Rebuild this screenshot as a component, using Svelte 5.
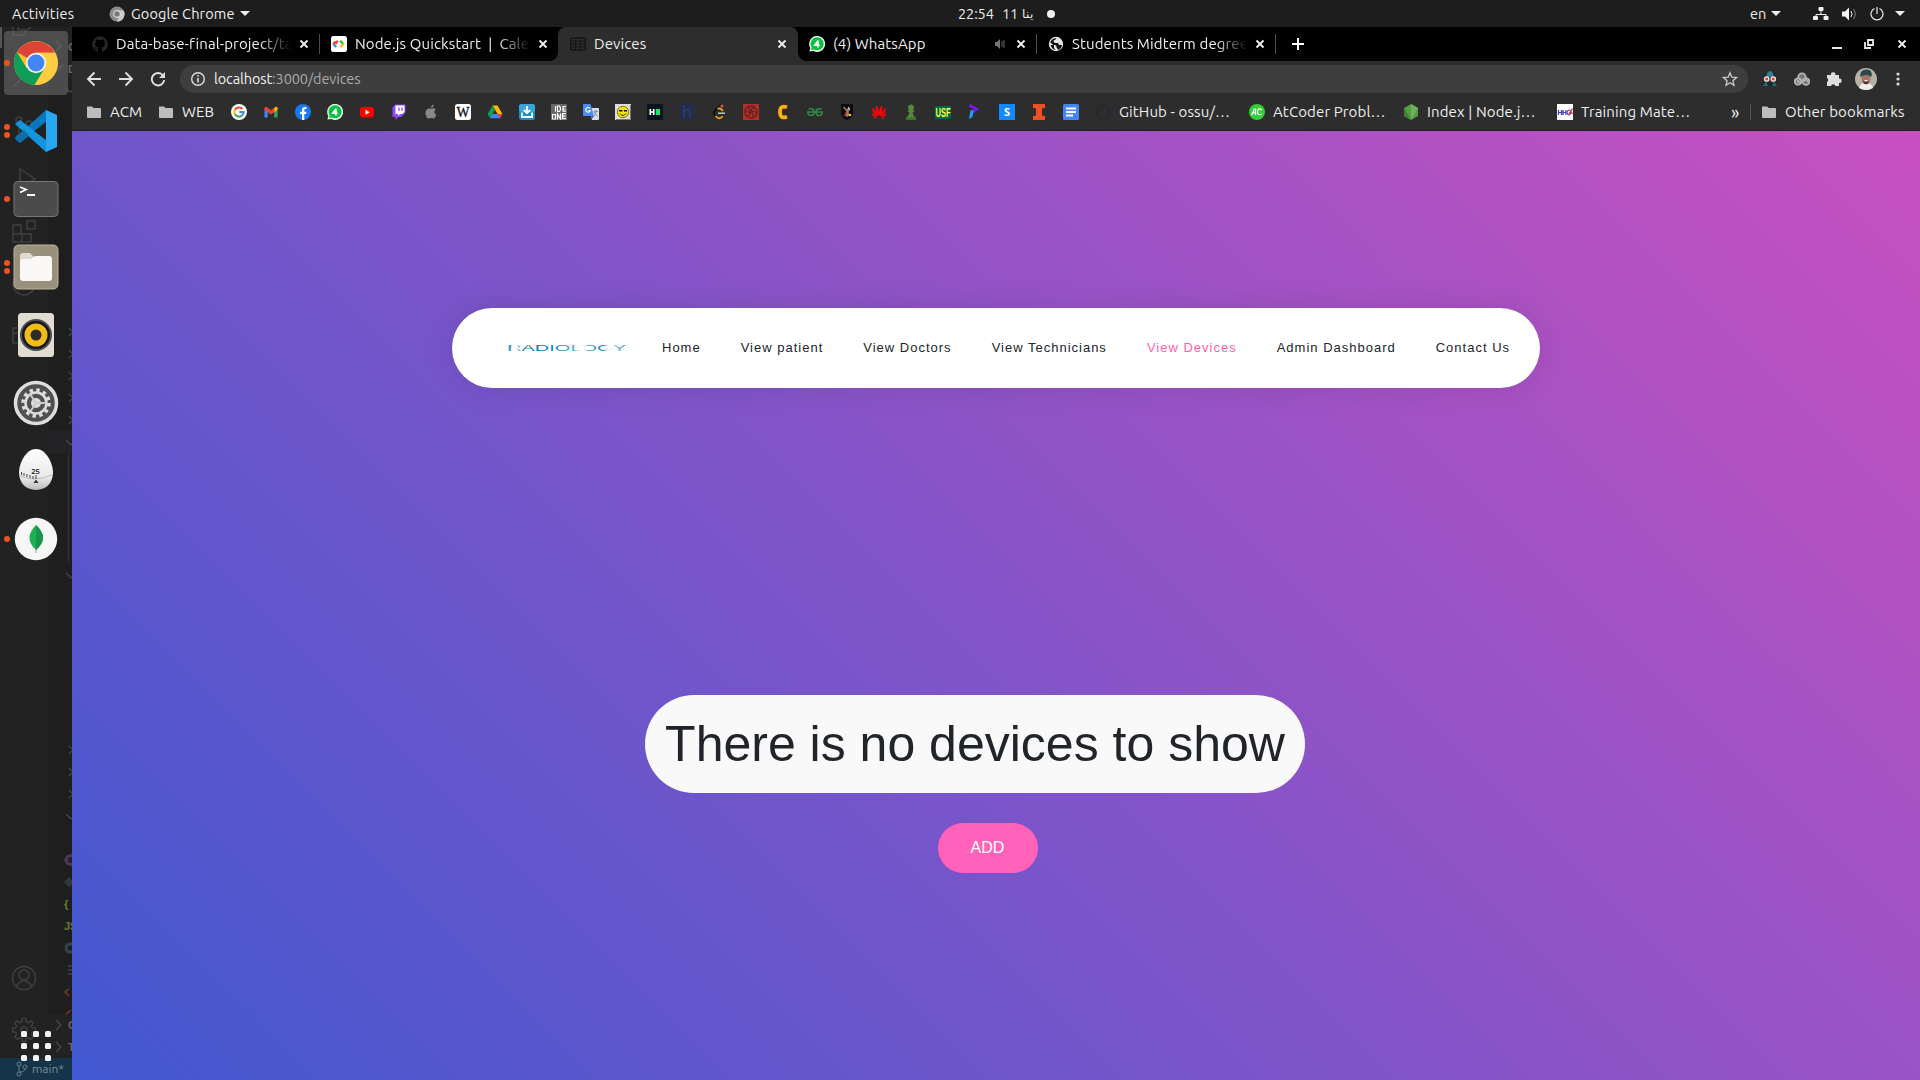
<script>
  const icons = {
    folder: '<path d="M1 2.5h5l1.6 1.6H14q1 0 1 1V13q0 1-1 1H2q-1 0-1-1z" fill="#bdbdbd"/>',
    google: '<circle cx="8" cy="8" r="8" fill="#fff"/><g fill="none" stroke-width="2.1"><path d="M11.4 5A4.6 4.6 0 0 0 4 5.7" stroke="#ea4335"/><path d="M4 5.7a4.6 4.6 0 0 0 0 4.6" stroke="#fbbc05"/><path d="M4 10.3a4.6 4.6 0 0 0 7 1.2" stroke="#34a853"/><path d="M11 11.5A4.6 4.6 0 0 0 12.6 8H8.3" stroke="#4285f4"/></g>',
    gmail: '<path d="M1.5 13.5V4.2l3.2 2.3v7z" fill="#4285f4"/><path d="M14.5 13.5V4.2l-3.2 2.3v7z" fill="#34a853"/><path d="M1.5 4.5Q1.6 2.3 3.7 3L8 6.2 12.3 3q2.1-.7 2.2 1.5v1.3L8 10.5 1.5 5.8z" fill="#ea4335"/><path d="M11.3 4v4.2l3.2-2.4V4.3q-.3-2-2.2-1.3z" fill="#fbbc04"/>',
    facebook: '<circle cx="8" cy="8" r="8" fill="#1877f2"/><path d="M7 16v-6H5V7.7h2V6q0-3 2.8-3h1.7v2h-1q-1.2 0-1.2 1.1v1.6h2.2l-.4 2.3H9.3v6z" fill="#fff"/>',
    whatsapp: '<path d="M.4 15.6 1.3 12A8 8 0 1 1 4.5 15z" fill="#e8f5e9"/><path d="M2 14l.7-2.6A6.5 6.5 0 1 1 5 13.5z" fill="#0bc142"/><path d="M9 4.5v7M9 4.8 5.8 9.2h4.900" fill="none" stroke="#fff" stroke-width="1.6"/>',
    youtube: '<rect x="1" y="3" width="14" height="10.5" rx="2.4" fill="#f00"/><path d="M6.5 5.8v5L10.7 8.3z" fill="#fff"/>',
    twitch: '<path d="M1.5 3.4 4.4.5h10.1v8l-4.4 4.4H7.4l-2.9 2.9v-2.9h-3z" fill="#9146ff"/><path d="M4.5 1.6h9v6.3l-2.2 2.2H9l-2 2v-2H4.5z" fill="#fff"/><path d="M8 3.6v3.5m3-3.5v3.5" stroke="#9146ff" stroke-width="1.3"/>',
    apple: '<path d="M8 4.8c1.2-.9 3.6-1.1 4.8.7-2 1.2-1.9 4.2.6 5.2-.6 1.8-1.8 3.8-3 3.8-.9 0-1.4-.5-2.3-.5s-1.6.5-2.4.5C3.8 14.500 2.500 11 2.500 8.700c0-3.600 3-4.900 5.500-3.900zM8 4C7.900 2.200 9.300.7 10.700.6 10.900 2.400 9.500 4 8 4z" fill="#888"/>',
    wiki: '<rect width="16" height="16" rx="2.500" fill="#fff"/><text x="8" y="12.800" textLength="13" lengthAdjust="spacingAndGlyphs" text-anchor="middle" font-family="Liberation Serif" font-size="14" fill="#111" stroke="#111" stroke-width=".3">W</text>',
    drive: '<path d="M5.600 1.500h4.800l5 8.500h-4.800z" fill="#ffba00"/><path d="M5.600 1.500 8 5.700 3 14.300.6 10z" fill="#0f9d58"/><path d="M5.300 10h10L13 14.300H3z" fill="#4285f4"/><path d="M10.600 10h4.800L13 14.300z" fill="#ea4335"/>',
    download: '<rect width="16" height="16" rx="2.500" fill="#168ec8"/><rect width="16" height="8" rx="2.500" fill="#3aa4d6"/><path d="M8 2v7M4.800 6 8 9.300 11.200 6M3 8.500V13h10V8.500" fill="none" stroke="#fff" stroke-width="1.800"/>',
    ideone: '<rect width="16" height="16" fill="#666"/><g fill="none" stroke="#fff" stroke-width="1.200"><path d="M4.500 2v5.500M6.500 2v5.500h2q2-2.700 0-5.500zM15 2.500h-3v4.700h3M12 5h2.500M1.500 10.500v4.500h3v-4.500zM6.500 15.500V10l3 5V9.500M15 9.700h-3.500v5H15M12 12.200h2.500"/></g>',
    translate: '<path d="M6 4h9q1 0 1 1v10q0 1-1 1H9z" fill="#dce0e3"/><path d="M1 0h6.500L11 12H1q-1 0-1-1V1q0-1 1-1z" fill="#4c8bf5"/><path d="M7.500 12H11l-2 3z" fill="#3367d6"/><path d="M7 4.500A2.300 2.300 0 1 0 7.300 6.500H5.200" fill="none" stroke="#fff" stroke-width="1.100"/><path d="M10.500 7.300H15M13 6v1.300q-.2 3-2 4.700m0-4 3.500 4.500" fill="none" stroke="#78909c"/>',
    smile: '<rect width="16" height="16" fill="#ddd"/><path d="M1 15.500h14.500V1" fill="none" stroke="#777"/><circle cx="8" cy="8" r="5.700" fill="#f4e800" stroke="#665e00" stroke-width=".8"/><path d="M4 6h3.300v1.500H4.500zm4.700 0H12v1.500H9z"/><path d="M5 9.500q3 4 6 0" fill="none" stroke="#222"/>',
    hackerrank: '<rect width="16" height="16" fill="#0b141e"/><path d="M3.300 5v6m3.400-6v6M3 8h4" stroke="#fff" stroke-width="1.700" fill="none"/><path d="M8.700 5H13v6H8.700z" fill="#1be564"/>',
    hacker: '<rect width="16" height="16" rx="1" fill="#252c48"/><text x="8" y="13.500" text-anchor="middle" font-family="Open Sans" font-size="16" fill="#2e3f72">h</text>',
    leetcode: '<path d="M10 .8 3.800 6.500q-2.200 2.300 0 4.500l2.200 2.500q2 1.800 4.200 0L12 11.500" fill="none" stroke="#101010" stroke-width="1.800"/><path d="M6.500 4.700q2-1 3.500.3l2 1.800M4.500 12l1.800 1.700q1.900 1.300 3.800 0l1.700-1.600" stroke="#f9a51a" fill="none" stroke-width="1.700"/><path d="M7 9.200h7" stroke="#bbb" stroke-width="1.600"/><circle cx="11" cy="2" r="1.600" fill="#d05050"/>',
    wheel: '<rect width="16" height="16" fill="#b02f2a"/><g stroke="#61201d" fill="none" stroke-width="1.200"><circle cx="8" cy="8" r="6.200"/><path d="M8 8Q8 3 12 4M8 8q4-2 6 2M8 8q4 3 1 6M8 8Q7 12 3 12M8 8Q4 9 2 6M8 8Q4 5 7 2"/></g>',
    codechef: '<rect width="16" height="16" rx="2" fill="#302b24"/><path d="M12 3.200Q5 .8 5 8t7 4.900" fill="none" stroke="#fbae17" stroke-width="3.800"/>',
    geeks: '<g fill="none" stroke="#2f8d46" stroke-width="1.500"><path d="M1.500 5q5-1.500 5.500 3T2 11Q.7 10 .8 8H15.200q0 3-2.200 3.500Q9 12 9 8t5.500-3"/></g>',
    shield: '<path d="M2 0h12v10q-1 4-6 6-5-2-6-6z" fill="#0c0c0c"/><path d="m5 4 2 1.500L9 4l2 1-1.500 3 1 3-2 2-2-1 1-4z" fill="#a97867"/><path d="m4.500 3 2 2M9.500 3l1 3" stroke="#eee"/><circle cx="11" cy="11" r="1.300" fill="#d9cb22"/><path d="m5.500 12 2-4" stroke="#c43b3b" stroke-width="1.300"/>',
    flower: '<g fill="#f0060c"><ellipse cx="6.300" cy="7" rx="1.500" ry="5" transform="rotate(-9 6.300 7)"/><ellipse cx="9.700" cy="7" rx="1.500" ry="5" transform="rotate(9 9.700 7)"/><ellipse cx="3.600" cy="8.500" rx="1.200" ry="4.800" transform="rotate(-27 3.600 8.500)"/><ellipse cx="12.400" cy="8.500" rx="1.200" ry="4.800" transform="rotate(27 12.400 8.500)"/><path d="M.5 8.500 5.500 13Q.5 13 .5 8.500m15 0L10.500 13q5 0 5-4.500M2 13.500h4v1H3zm8 0h4l-1 1h-3z"/></g>',
    pawn: '<path d="M8 .5a3 3 0 0 1 2 5.300l1.700 1.400-2 1Q10 12 13 13.500V16H3v-2.500Q6 12 6.300 8.200l-2-1L6 5.800A3 3 0 0 1 8 .5z" fill="#538a3a"/><path d="M3 13.500h10V16H3z" fill="#3f702c"/>',
    usf: '<rect y="2" width="16" height="13" fill="#006747"/><text x="8" y="13" textLength="15" lengthAdjust="spacingAndGlyphs" text-anchor="middle" font-family="Liberation Sans" font-weight="bold" font-size="12.500" fill="#ffff48">USF</text>',
    pshape: '<path d="M2.500 1.200 9.500 5.200 5 8.500" fill="none" stroke="#7418e8" stroke-width="3"/><path d="m2 15 1.500-8.500L6.500 6l-1 7z" fill="#1da1f2"/>',
    sblue: '<rect width="16" height="16" fill="#1389fd"/><text x="8" y="12" text-anchor="middle" font-family="Open Sans" font-weight="bold" font-size="11" fill="#fff">S</text>',
    ired: '<path d="M2 0h12v4h-2l-1 1v6l1 1h2v4H2v-4h2l1-1V5L4 4H2z" fill="#f04e23"/>',
    docs: '<rect width="16" height="16" rx="1.500" fill="#4285f4"/><path d="M3 4.500h10M3 8h10M3 11.500h7" stroke="#fff" stroke-width="1.800"/>',
    github: '<path d="M8 .3a7.900 7.900 0 0 0-2.600 15.300c.5 0 .6-.3.6-.6v-1.600c-2.200.5-2.700-.9-3.100-1.500-.3-.4-.7-.7-.3-.8.800 0 1.200.8 1.500 1.100.6.900 1.400.7 2 .4 0-.4.3-.8.5-1-2.600-.300-3.600-1.500-3.600-3.900 0-1 .3-1.700.9-2.300-.3-.7-.2-1.500.1-2.100.9 0 1.500.5 2 .8a8 8 0 0 1 4 0c.5-.3 1.200-.8 2-.8.3.6.4 1.400.1 2.100.6.600.9 1.300.9 2.300 0 2.400-1 3.600-3.600 3.900.4.400.6.900.6 1.600V15c0 .3.100.6.600.6A7.900 7.900 0 0 0 8 .3z" fill="#24292e"/>',
    atcoder: '<circle cx="8" cy="8" r="8" fill="#31cf38"/><path d="m2.800 11 2.500-6h1.200v6M4 9h2.300M13 6q-4-3-4.500 1.500T13 10" stroke="#fff" fill="none" stroke-width="1.200"/>',
    node: '<path d="m8 0 7 4v8l-7 4-7-4V4z" fill="#539e43"/><path d="m8 0 7 4-7 12z" fill="#6cb35b"/><path d="M1 4 8 16 1 12z" fill="#3c7e36"/>',
    hho: '<rect width="16" height="16" fill="#fff"/><path d="M1.500 6v5m3-5v5m-3-2.500h3M6 6v5m0-2.500h3M9 6v5" stroke="#3a35ba" fill="none" stroke-width="1.200"/><ellipse cx="12" cy="8.500" rx="1.800" ry="2.500" fill="none" stroke="#3a35ba"/><path d="m12 10 3.500-5.500M13.500 7l2 3" stroke="#e32b41" stroke-width="1.300"/>',
    quickstart: '<rect width="16" height="16" rx="2.500" fill="#fff"/><g fill="none" stroke-width="2.200"><path d="M6.800 4.800 4.300 8" stroke="#ea4335"/><path d="m2.200 8 3 3" stroke="#4285f4"/><path d="m2.200 8 2.500-2.500" stroke="#ea4335"/><path d="m9.200 4.800 3 3.200" stroke="#34a853"/><path d="M13 7.500 9.200 11" stroke="#fbbc04"/></g>',
    table: '<rect x=".8" y="2" width="14.400" height="12" rx="1.500" fill="none" stroke="#151515" stroke-width="1.400"/><path d="M1 5h14M1 8h14M1 11h14M5.500 5v9m5-9v9" stroke="#151515" stroke-width="1.200"/>',
    globe: '<circle cx="8" cy="8" r="7.200" fill="#e3e3e3"/><path d="M8.500 2.300q-1 2-3 2.200 0 2 1.500 2.500h3l1 2h3q-.5 4-4 5-.2-2-1.500-2.200V10L7 9H2.500Q4 13.500 7.500 14L6 12V9.500L2.300 6.500Q4 2 8.500 2.300z" fill="#111"/>'
  };

  const tabs = [
    { icon: 'github', title: 'Data-base-final-project/ta', fade: true, line: true },
    { icon: 'quickstart', title: 'Node.js Quickstart  |  Cale', fade: true },
    { icon: 'table', title: 'Devices', active: true },
    { icon: 'whatsapp', title: '(4) WhatsApp', sound: true, line: true },
    { icon: 'globe', title: 'Students Midterm degree', fade: true, line: true }
  ];
  const favorites = ['google', 'gmail', 'facebook', 'whatsapp', 'youtube', 'twitch', 'apple', 'wiki', 'drive', 'download', 'ideone', 'translate', 'smile', 'hackerrank', 'hacker', 'leetcode', 'wheel', 'codechef', 'geeks', 'shield', 'flower', 'pawn', 'usf', 'pshape', 'sblue', 'ired', 'docs'];
  const named = [['github', 'GitHub - ossu/…'], ['atcoder', 'AtCoder Probl…'], ['node', 'Index | Node.j…'], ['hho', 'Training Mate…']];
  const links = ['Home', 'View patient', 'View Doctors', 'View Technicians', 'View Devices', 'Admin Dashboard', 'Contact Us'];
  const rightChevrons = [332, 354, 376, 398, 420, 750, 772, 794];

  // Outline of an eight-toothed cog around a centre point.
  const cog = (cx, cy, outer, inner) => {
    const points = [];
    for (let tooth = 0; tooth < 8; tooth++) {
      for (const [offset, radius] of [[-15, inner], [-9, outer], [9, outer], [15, inner]]) {
        const angle = ((tooth * 45 + offset) * Math.PI) / 180;
        points.push(`${(cx + radius * Math.sin(angle)).toFixed(1)},${(cy - radius * Math.cos(angle)).toFixed(1)}`);
      }
    }
    return points.join(' ');
  };
</script>

{#snippet icon(name)}
  <svg class="ico" viewBox="0 0 16 16">{@html icons[name]}</svg>
{/snippet}

{#snippet cross()}
  <svg class="cross" viewBox="0 0 10 10"><path d="m1.500 1.500 7 7m0-7-7 7" /></svg>
{/snippet}

<div class="screen">
  <header class="topbar">
    <span class="activities">Activities</span>
    <div class="appmenu">
      <svg width="16" height="16" viewBox="0 0 16 16"><circle cx="8" cy="8" r="7.500" fill="#8b8b8b" /><path d="M8 4.500h6.700A7.500 7.500 0 0 1 7.500 15.500L11 10z" fill="#c9c9c9" /><circle cx="8" cy="8" r="3.300" fill="#777" stroke="#ddd" stroke-width="1.200" /></svg>
      <span class="appname">Google Chrome</span><i class="tri"></i>
    </div>
    <div class="clock"><span class="time">22:54</span><span class="day">11</span><span class="month">ينا</span><i class="dot"></i></div>
    <div class="status">
      <span>en</span><i class="tri"></i>
      <svg class="net" width="16" height="14" viewBox="0 0 16 14"><path d="M8 4v4M3 10V7.500h10V10" fill="none" stroke="#eee" /><g fill="#f2f2f2"><rect x="5.500" y="0" width="5" height="4" rx="1" /><rect x="0" y="9" width="5" height="4" rx="1" /><rect x="10.500" y="9" width="5" height="4" rx="1" /></g></svg>
      <svg class="vol" width="15" height="14" viewBox="0 0 15 14"><path d="M0 4.500h3L7 .5v13l-4-4H0z" fill="#f2f2f2" /><path d="M9 4q2 3 0 6" fill="none" stroke="#eee" /><path d="M11.500 2q3.500 5 0 10" fill="none" stroke="#888" /></svg>
      <svg class="power" width="14" height="14" viewBox="0 0 14 14"><path d="M4.500 1.500a6 6 0 1 0 5 0M7 0v7" fill="none" stroke="#eee" stroke-width="1.200" /></svg>
      <i class="tri"></i>
    </div>
  </header>

  <div class="desktop">
    <aside class="dock">
      <svg class="behind" width="72" height="1053" viewBox="0 27 72 1053">
        <rect y="27" width="48" height="1053" fill="#222" />
        <rect x="48" y="27" width="24" height="1053" fill="#1e1e1e" />
        <rect x="48" y="27" width="24" height="52" fill="#222" />
        <rect x="48" y="431" width="24" height="22" fill="#232325" />
        <rect x="48" y="1014" width="24" height="44" fill="#222" />
        <path d="M0 27h2v21H0z" fill="#555" />
        <g fill="none" stroke="#404040" stroke-width="1.400">
          <path d="M13 27v8h12v-5M18 27v3h9l4-3M13 87l9-9M20 185v-16l15 10-13 8M13 225h8v9h10v8H13v-17m0 9h9v8M27 221h8v8h-8z" />
          <circle cx="19" cy="120" r="3" /><circle cx="29" cy="124" r="3" /><circle cx="19" cy="138" r="3" /><path d="M19 123v12q10 0 10-8" />
          <circle cx="24" cy="284" r="11" /><path d="M17 328h-4v15h5m-5-10h5" />
          <circle cx="24" cy="978" r="11.500" /><circle cx="24" cy="975" r="5" /><path d="M16 986q8-10 16 0" />
          <polygon points={cog(24, 1030, 11.5, 8.5)} /><circle cx="24" cy="1030" r="3" />
        </g>
        <g fill="none" stroke="#4a4a4a" stroke-width="1.200">
          <path d="m56 41 5 5-5 5M55 67l3 3 5-5M66 88l4 4 3-2" />
          {#each rightChevrons as y}<path d="M69 {y - 4}l4 4-4 4" />{/each}
          <path d="m66 440 5 5 2-2M66 573l5 5 2-2M66 814l5 5 2-2M56 1020l5 5-5 5M56 1042l5 5-5 5" />
          <path d="M68.500 453v110" stroke="#333" />
          <path d="M68 966h4m-4 4h4m-4 4h4" stroke="#555" />
        </g>
        <path d="m67 855 5-1v12l-5-1-3-5z" fill="#4f3763" /><circle cx="70.500" cy="860" r="3" fill="#222" />
        <path d="m64 882 5-5 3 3v5l-3 2z" fill="#30383d" /><circle cx="70" cy="948" r="4" fill="none" stroke="#34444e" stroke-width="3" />
        <path d="m69 989-4 3 4 4M71 1010l-5 4" fill="none" stroke="#733e2d" stroke-width="1.500" />
        <g class="code"><text x="64" y="908" fill="#77762e">{'{'}</text><text x="64" y="930" fill="#77762e">JS</text><text x="68" y="51" fill="#666">O</text><text x="68" y="73" fill="#666">D</text><text x="68" y="1029" fill="#666">O</text><text x="68" y="1051" fill="#666">T</text></g>
        <rect y="1058" width="72" height="22" fill="#15344a" />
        <g fill="none" stroke="#6b7d87"><circle cx="19" cy="1064" r="2" /><circle cx="25" cy="1067" r="2" /><circle cx="19" cy="1074" r="2" /><path d="M19 1066v6q6 0 6-3" /></g>
        <text class="branch" x="32" y="1073">main*</text>
      </svg>

      <div class="app current"><i class="run one"></i>
        <svg viewBox="0 0 48 48"><circle cx="24" cy="24" r="22" fill="#fbc02d" /><path d="M24 24 4.950 13A22 22 0 0 1 43.050 13.800H24z" fill="#dd4435" /><path d="M4.950 13A22 22 0 0 0 24 46l9.500-16.800L24 24 14.600 29z" fill="#109d58" /><path d="M24 13.800h19A22 22 0 0 1 22.500 46l10.300-17z" fill="#ffcd40" /><circle cx="24" cy="24" r="10.200" fill="#f1f1f1" /><circle cx="24" cy="24" r="8.400" fill="#4285f4" /></svg>
      </div>
      <div class="app"><i class="run a"></i><i class="run b"></i>
        <svg viewBox="0 0 48 48"><path d="M3 31 34 3v12L8 36z" fill="#0878be" /><path d="m3 17 5-4 26 20v12z" fill="#1295dc" /><path d="M34 3 45 8v32l-11 5z" fill="#29a8f2" /><path d="M34 15v18L22.500 24z" fill="#222" /><path d="m3 31 9-8 5 5-9 8z" fill="#0b6fac" /></svg>
      </div>
      <div class="app"><i class="run one"></i>
        <svg viewBox="0 0 48 48"><rect x="2" y="6.500" width="44" height="35" rx="4" fill="#4b4b4b" stroke="#777" /><path d="m8 12 6 2.500L8 17.500M15 20h8" fill="none" stroke="#fff" stroke-width="1.800" /></svg>
      </div>
      <div class="app"><i class="run a"></i><i class="run b"></i>
        <svg viewBox="0 0 48 48"><rect x="2" y="2" width="44" height="44" rx="4.500" fill="#9a917d" stroke="#bbb39f" /><path d="M8 13q0-3 3-3h7l4 4h15q3 0 3 3v8H8z" fill="#dedad0" /><path d="M8 19q0-3 3-3h8l4-3h14q3 0 3 3v19q0 3-3 3H11q-3 0-3-3z" fill="#faf9f7" /></svg>
      </div>
      <div class="app">
        <svg viewBox="0 0 48 48"><rect x="6" y="2" width="36" height="44" rx="3.500" fill="#e2ddd2" /><circle cx="24" cy="24" r="16" fill="#4a4c50" /><circle cx="24" cy="24" r="14" fill="#17181f" /><circle cx="24" cy="24" r="11.500" fill="#f1bc17" /><circle cx="24" cy="24" r="5.500" fill="#2c2c2c" /></svg>
      </div>
      <div class="app">
        <svg viewBox="0 0 48 48"><circle cx="24" cy="24" r="20.500" fill="#505050" stroke="#dedede" stroke-width="3.500" /><circle cx="24" cy="24" r="13" fill="none" stroke="#ddd" stroke-width="3.500" stroke-dasharray="3.400 3.400" /><circle cx="24" cy="24" r="10.500" fill="none" stroke="#ddd" stroke-width="2.500" /><circle cx="24" cy="24" r="5" fill="#ddd" /><path d="M24 24h11M24 24l-6-9M24 24l-6 9" stroke="#ccc" stroke-width="2" /></svg>
      </div>
      <div class="app">
        <svg viewBox="0 0 48 48"><defs><linearGradient id="shell" x1="0" y1="0" x2="0" y2="1"><stop offset="0" stop-color="#fff" /><stop offset=".7" stop-color="#e9e9e9" /><stop offset="1" stop-color="#bbb" /></linearGradient></defs><path d="M24 2C34 2 41 16 41 26Q40 42 24 43 8 42 7 26C7 16 14 2 24 2z" fill="url(#shell)" /><path d="M8 29q16 6 32-1" fill="none" stroke="#bbb" /><path d="M9.500 25v3m2.500-2v3m3-2v3m3-2v3m3-2v3m3-4v4" stroke="#444" /><path d="m21.500 36 2.500-3.500 2.500 3.500z" fill="#333" /><text class="egg" x="19.300" y="27">25</text></svg>
      </div>
      <div class="app"><i class="run one"></i>
        <svg viewBox="0 0 48 48"><circle cx="24" cy="24" r="21.200" fill="#f6f6f6" /><path d="M24 31v7" stroke="#999" /><path d="M24 10Q38 23 24 35 11 23 24 10z" fill="#21af55" /><path d="M24 10Q38 23 24 35z" fill="#16964c" /></svg>
      </div>
      <div class="spacer"></div>
      <div class="grid">{#each Array(9) as _}<i></i>{/each}</div>
    </aside>

    <main class="browser">
      <div class="tabstrip">
        {#each tabs as t}
          <div class="tab" class:active={t.active} class:line={t.line}>
            {@render icon(t.icon)}
            <span class="title" class:fade={t.fade}>{t.title}</span>
            {#if t.sound}<svg class="sound" viewBox="0 0 10 10"><path d="M0 3h2l3-3v10L2 7H0z" fill="#777" /><path d="M7 2v6m2-7v8" stroke="#666" /></svg>{/if}
            {@render cross()}
          </div>
        {/each}
        <svg class="plus" viewBox="0 0 12 12"><path d="M6 0v12M0 6h12" stroke="#fff" stroke-width="2" /></svg>
        <div class="window">
          <svg width="10" height="10" viewBox="0 0 10 10"><path d="M0 9h10" stroke="#e8e8e8" stroke-width="2" /></svg>
          <svg width="10" height="10" viewBox="0 0 10 10"><path d="M4 1h5v5H4zM1 3v6h6" fill="none" stroke="#e8e8e8" stroke-width="1.800" /></svg>
          {@render cross()}
        </div>
      </div>

      <div class="toolbar">
        <div class="arrows">
          <svg viewBox="0 0 16 16"><path d="M15 8H2m6.500-6.500L2 8l6.500 6.500" /></svg>
          <svg viewBox="0 0 16 16"><path d="M1 8h13M7.500 1.500 14 8l-6.500 6.500" /></svg>
          <svg viewBox="0 0 16 16"><path d="M13 4.500A6.200 6.200 0 1 0 14.200 9" /><path d="M15 1v6H9z" class="solid" /></svg>
        </div>
        <div class="omnibox">
          <svg width="16" height="16" viewBox="0 0 16 16"><circle cx="8" cy="8" r="6.300" fill="none" stroke="#ddd" stroke-width="1.400" /><path d="M8 7v4.500M8 4v1.600" stroke="#ddd" stroke-width="1.600" /></svg>
          <span class="url"><b>localhost</b>:3000/devices</span>
          <svg class="star" width="16" height="16" viewBox="0 0 16 16"><path d="m8 1.800 1.800 4.400 4.700.4-3.600 3.100 1.100 4.600L8 11.800l-4 2.500 1.100-4.600L1.500 6.600l4.700-.4z" fill="none" stroke="#c8c8c8" stroke-width="1.300" /></svg>
        </div>
        <div class="extensions">
          <svg viewBox="0 0 16 16"><path d="M1 15V9Q1 1 8 1t7 8v6z" fill="#182932" /><path d="M4 6q1-6 4-6t4 6z" fill="#347e91" /><path d="m1 15 3-5 2 5zm9 0 2-5 3 5z" fill="#286675" /><circle cx="4.700" cy="8" r="2.200" fill="#c94838" stroke="#ffe1cf" stroke-width="1.300" /><circle cx="11.300" cy="8" r="2.200" fill="#c94838" stroke="#ffe1cf" stroke-width="1.300" /></svg>
          <svg viewBox="0 0 16 16"><g fill="#777" stroke="#b5b5b5" stroke-width="1.800"><circle cx="8" cy="6" r="3.700" /><circle cx="4" cy="10.500" r="3.200" /><circle cx="12" cy="10.500" r="3.400" /></g><path d="M10 10q3-3 4 1M3 10q3-1 2 2" fill="none" stroke="#ddd" /></svg>
          <svg viewBox="0 0 16 16"><path d="M1 4h4a2.200 2.200 0 1 1 4.300 0H13v3.500a2.200 2.200 0 1 1 0 4.300V15H9.500a2.300 2.300 0 0 0-4.500 0H1v-4a2.300 2.300 0 0 0 0-4z" fill="#dedede" /></svg>
          <svg class="avatar" viewBox="0 0 22 22"><circle cx="11" cy="11" r="11" fill="#b5b2a5" /><path d="M4 20q1-5 7-5t7 5q-7 4-14 0" fill="#eee" /><ellipse cx="11" cy="10.500" rx="4.500" ry="6" fill="#a97462" /><path d="M5.500 9Q4 2 11 1.500T16.500 9Q11 5 5.500 9z" fill="#28494e" /><path d="M8 12.500q3 3 6 0l-1 3.500H9z" fill="#533" /><path d="M9.500 12.500h3" stroke="#fff" /></svg>
          <svg viewBox="0 0 16 16"><g fill="#ddd"><circle cx="8" cy="3" r="1.600" /><circle cx="8" cy="8" r="1.600" /><circle cx="8" cy="13" r="1.600" /></g></svg>
        </div>
      </div>

      <div class="bookmarks">
        <div class="folder">{@render icon('folder')}<span>ACM</span></div>
        <div class="folder">{@render icon('folder')}<span>WEB</span></div>
        {#each favorites as f}<div class="fav">{@render icon(f)}</div>{/each}
        {#each named as [i, label]}<div class="named">{@render icon(i)}<span>{label}</span></div>{/each}
        <span class="more">»</span>
        <div class="other">{@render icon('folder')}<span>Other bookmarks</span></div>
      </div>

      <section class="page">
        <nav>
          <svg class="logo" viewBox="0 0 120 10"><defs><linearGradient id="ink" gradientUnits="userSpaceOnUse" x1="0" y1="0" x2="120" y2="0"><stop offset="0" stop-color="#3aa3cb" /><stop offset=".03" stop-color="#2c91bc" /><stop offset=".05" stop-color="#fff" /><stop offset=".08" stop-color="#fff" /><stop offset=".11" stop-color="#2c91bc" /><stop offset=".2" stop-color="#087cad" /><stop offset=".4" stop-color="#2189b8" /><stop offset=".55" stop-color="#50a8ce" /><stop offset=".59" stop-color="#bfe0ed" /><stop offset=".64" stop-color="#fff" /><stop offset=".68" stop-color="#50a8ce" /><stop offset=".8" stop-color="#1082b3" /><stop offset=".85" stop-color="#fff" /><stop offset=".89" stop-color="#8bc6de" /><stop offset="1" stop-color="#2c91bc" /></linearGradient></defs><text transform="scale(1 .66)" x="0" y="12" textLength="119" lengthAdjust="spacingAndGlyphs" fill="url(#ink)">RADIOLOGY</text></svg>
          {#each links as l}<a href="#page" class:here={l === 'View Devices'}>{l}</a>{/each}
        </nav>
        <h1>There is no devices to show</h1>
        <button>ADD</button>
      </section>
    </main>
  </div>
</div>

<style>
  :global(body) { margin: 0; overflow: hidden; background: #1d1d1d; }
  .screen { width: 1920px; height: 1080px; overflow: hidden; display: flex; flex-direction: column; font-family: Ubuntu, "Noto Sans", sans-serif; font-size: 15px; letter-spacing: .12px; color: #eee; }
  svg { flex: none; display: block; letter-spacing: 0; }
  span { white-space: pre; }

  .topbar { height: 27px; flex: none; display: grid; grid-template-columns: 109px 849px 1fr auto; align-items: center; background: #1d1d1d; font-size: 14.500px; line-height: 26px; }
  .activities { padding-left: 12px; letter-spacing: .3px; }
  .appmenu { display: flex; align-items: center; }
  .appname { width: 104px; margin: 0 5px 0 6px; letter-spacing: .15px; }
  .tri { border: 5px solid transparent; border-top-color: #eee; border-bottom: 0; }
  .clock { display: flex; align-items: center; }
  .time { width: 44px; letter-spacing: -.1px; }
  .day { width: 20px; letter-spacing: -.2px; }
  .month { width: 25px; font-size: 12px; letter-spacing: 0; }
  .dot { width: 8px; height: 8px; border-radius: 50%; background: #f2f2f2; }
  .status { display: flex; align-items: center; padding-right: 15px; }
  .status span { margin-right: 5px; letter-spacing: -.2px; }
  .net { margin-left: 32px; }
  .vol { margin-left: 13px; }
  .power { margin: 0 11px 0 13px; }

  .desktop { flex: 1; display: flex; min-height: 0; }
  .dock { position: relative; width: 72px; flex: none; display: flex; flex-direction: column; align-items: center; padding-top: 4px; box-sizing: border-box; background: #222; overflow: hidden; }
  .behind { position: absolute; left: 0; top: 0; }
  .code { font: bold 11px "Liberation Sans", sans-serif; }
  .branch { font-size: 12px; fill: #7f8d96; }
  .app { position: relative; width: 64px; height: 64px; margin-bottom: 4px; display: flex; align-items: center; justify-content: center; border-radius: 4px; }
  .app svg { width: 48px; height: 48px; }
  .current { background: rgba(120, 120, 120, .5); }
  .run { position: absolute; left: 0; width: 6px; height: 6px; border-radius: 50%; background: #e95420; }
  .one { top: 29px; }
  .a { top: 25px; }
  .b { top: 33px; }
  .egg { font: 600 7.500px "Noto Sans", sans-serif; fill: #222; }
  .spacer { flex: 1; }
  .grid { position: relative; display: grid; grid-template-columns: repeat(3, 6px); gap: 6px; margin-bottom: 19px; }
  .grid i { width: 6px; height: 6px; border-radius: 1.500px; background: #f2f2f2; }

  .browser { flex: 1; min-width: 0; display: flex; flex-direction: column; background: #2d2d2d; }
  .ico { width: 16px; height: 16px; }
  .tabstrip { height: 34px; flex: none; display: flex; align-items: center; padding-left: 9px; background: #000; }
  .tab { width: 239px; height: 34px; box-sizing: border-box; display: flex; align-items: center; padding: 0 11px; position: relative; }
  .tab.active { width: 240px; margin-left: -1px; padding-left: 12px; background: #2d2d2d; border-radius: 8px 8px 0 0; }
  .tab.active::before, .tab.active::after { content: ""; position: absolute; bottom: 0; width: 8px; height: 8px; }
  .tab.active::before { left: -8px; background: radial-gradient(circle at 0 0, transparent 7.500px, #2d2d2d 8px); }
  .tab.active::after { right: -8px; background: radial-gradient(circle at 100% 0, transparent 7.500px, #2d2d2d 8px); }
  .tab.line::after { content: ""; position: absolute; right: 0; top: 7px; width: 1px; height: 20px; background: #4a4a4a; }
  .title { margin-left: 8px; flex: 1; min-width: 0; overflow: hidden; line-height: 20px; }
  .fade { mask-image: linear-gradient(90deg, #000 82%, transparent 100%); }
  .cross { width: 10px; height: 10px; margin-left: 8px; }
  .cross path { stroke: #eee; stroke-width: 1.900; fill: none; }
  .sound { width: 10px; height: 10px; margin-right: 3px; }
  .plus { width: 12px; height: 12px; margin-left: 16px; }
  .window { margin-left: auto; display: flex; gap: 22px; padding-right: 13px; }
  .window .cross { margin-left: 1px; }

  .toolbar { height: 36px; flex: none; display: flex; align-items: center; }
  .arrows { width: 108px; box-sizing: border-box; display: flex; gap: 16px; padding-left: 14px; }
  .arrows svg { width: 16px; height: 16px; fill: none; stroke: #e0e0e0; stroke-width: 1.900; }
  .arrows .solid { fill: #e0e0e0; stroke: none; }
  .omnibox { width: 1568px; height: 28px; box-sizing: border-box; border-radius: 14px; background: #3e3e3e; display: flex; align-items: center; padding: 0 10px; }
  .url { margin-left: 8px; font-size: 14.500px; letter-spacing: -.1px; color: #aaa; line-height: 20px; }
  .url b { font-weight: 400; color: #f2f2f2; }
  .star { margin-left: auto; }
  .extensions { display: flex; align-items: center; padding-left: 14px; gap: 16px; }
  .extensions svg { width: 16px; height: 16px; }
  .extensions .avatar { width: 22px; height: 22px; margin: 0 -3px; }

  .bookmarks { height: 34px; flex: none; display: flex; align-items: center; padding: 0 0 4px 14px; box-sizing: border-box; line-height: 20px; border-bottom: 1px solid #202020; }
  .folder { width: 72px; display: flex; gap: 8px; align-items: center; }
  .folder + .fav { margin-left: 1px; }
  .fav { width: 32px; flex: none; }
  .named { width: 154px; flex: none; display: flex; gap: 8px; align-items: center; }
  .more { width: 20px; margin: 0 10px 0 20px; font-size: 18px; line-height: 16px; box-sizing: border-box; border-right: 1px solid #555; }
  .other { display: flex; gap: 8px; align-items: center; }

  .page { flex: 1; min-height: 0; background: linear-gradient(45deg, #4158d0, #c850c0); display: flex; flex-direction: column; align-items: flex-start; font-family: "Liberation Sans", Arial, sans-serif; letter-spacing: 0; }
  nav { width: 1088px; height: 80px; box-sizing: border-box; margin: 177px 0 0 380px; border-radius: 40px; background: #fff; box-shadow: 0 0 30px rgba(0, 0, 0, .1); display: flex; align-items: center; gap: 40px; padding: 0 0 1px 55px; }
  nav a { font-size: 13px; line-height: 15px; letter-spacing: 1px; color: #212529; text-decoration: none; white-space: nowrap; }
  nav a.here { color: #ff5fae; }
  .logo { width: 120px; height: 10px; margin-right: -5px; overflow: hidden; }
  .logo text { font: 13px "Liberation Sans", sans-serif; }
  h1 { width: 660px; height: 98px; box-sizing: border-box; margin: 307px 0 0 573px; border-radius: 50px; background: #f9f9f9; color: #212529; font-size: 50px; font-weight: 400; line-height: 98px; text-align: center; white-space: nowrap; }
  button { width: 100px; height: 50px; margin: 30px 0 0 866px; padding: 0 1px 0 0; border: 0; border-radius: 25px; background: #ff62b8; color: #fff; font: 16px "Liberation Sans", sans-serif; }
</style>
